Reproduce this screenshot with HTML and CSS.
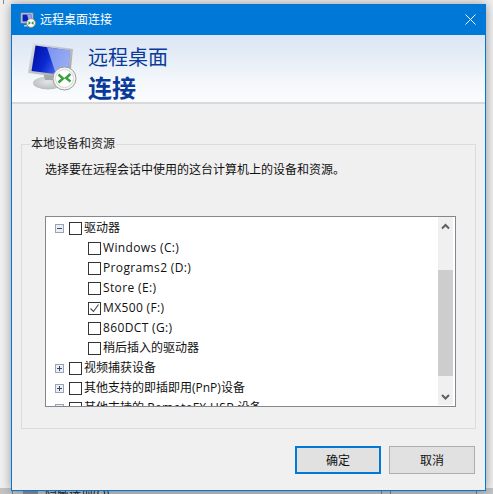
FILE: index.html
```html
<!DOCTYPE html>
<html lang="zh">
<head>
<meta charset="utf-8">
<title>远程桌面连接</title>
<link rel="stylesheet" href="styles.css">
</head>
<body>
<div class="backdrop-line"></div>
<div class="backdrop-strip">
  <i class="tick tick-a"></i><i class="tick tick-b"></i><i class="tick tick-c"></i><i class="tick tick-d"></i>
  <i class="foot-icon"></i>
  <span class="foot-text">隐藏选项(O)</span>
</div>
<main class="window">
  <header class="titlebar">
    <svg class="title-icon" width="16" height="16" viewBox="0 0 16 16">
      <rect x="1" y="1" width="12" height="10" fill="#d4d6da" stroke="#8d9095" stroke-width="0.8"/>
      <rect x="2.5" y="2.5" width="9" height="7" fill="#0a1fb8"/>
      <path d="M7 2.500h4.500v7H9z" fill="#8fa4f2"/>
      <path d="M4 13h7v1.500H4z" fill="#c6c8cc"/>
      <circle cx="11" cy="11" r="4.400" fill="#fff" stroke="#8f9491"/>
      <path d="M8.400 9.600l1.500 1.400-1.500 1.300M13.600 9.600l-1.600 1.400 1.600 1.300" fill="none" stroke="#2f9a33" stroke-width="1.200"/>
    </svg>
    <span class="title-text">远程桌面连接</span>
    <svg class="close" width="11" height="11" viewBox="0 0 11 11"><path d="M.5.5l10 10M10.500.5l-10 10" stroke="#fff" stroke-width="1" fill="none"/></svg>
  </header>
  <section class="banner">
    <svg class="banner-icon" width="50" height="50" viewBox="0 0 50 50">
      <defs>
        <linearGradient id="scr" x1="0" y1="0" x2="1" y2="0.4"><stop offset="0" stop-color="#000a9c"/><stop offset="0.5" stop-color="#0a2ad0"/><stop offset="1" stop-color="#5f7cf0"/></linearGradient>
        <linearGradient id="frm" x1="0" y1="0" x2="1" y2="1"><stop offset="0" stop-color="#e2e4e8"/><stop offset="1" stop-color="#9a9ea4"/></linearGradient>
        <radialGradient id="stand" cx="0.5" cy="0.4" r="0.6"><stop offset="0" stop-color="#e4e6e6"/><stop offset="1" stop-color="#b9bdbd"/></radialGradient>
      </defs>
      <ellipse cx="20" cy="41" rx="15" ry="6.500" fill="url(#stand)"/>
      <path d="M15 30h13l2 8H17z" fill="#a5a9ac"/>
      <path d="M5 1l40 6-3 29L0 31z" fill="url(#frm)"/>
      <path d="M7.500 3.500l34.500 5-2.500 25L3.500 29z" fill="url(#scr)"/>
      <path d="M19 5.200l23 3.300-2.500 25-11.500-1.300z" fill="#a9bcf7" opacity="0.75"/>
      <circle cx="36.500" cy="36.500" r="11.500" fill="#f4f5f4" stroke="#9a9e9c"/>
      <circle cx="36.500" cy="36.500" r="9" fill="#fff" stroke="#d4d7d5"/>
      <path d="M30.500 32.500l4.500 4-4.500 4M42.500 32l-4.500 4 4.500 3.500" fill="none" stroke="#37a23a" stroke-width="2.400"/>
    </svg>
    <div class="banner-copy">
      <div class="banner-top">远程桌面</div>
      <div class="banner-bottom">连接</div>
    </div>
  </section>
  <div class="content">
    <fieldset class="group">
      <legend class="legend">本地设备和资源</legend>
      <p class="hint">选择要在远程会话中使用的这台计算机上的设备和资源。</p>
      <div class="list">
        <div class="rows">
          <div class="row"><svg class="exp" width="9" height="9" viewBox="0 0 9 9"><rect x=".5" y=".5" width="8" height="8" fill="#eceef2" stroke="#9aa3b2"/><path d="M2 4.500h5" stroke="#2d4a80"/></svg><span class="box"></span><span class="label">驱动器</span></div>
          <div class="row child"><span class="box"></span><span class="label latin">Windows (C:)</span></div>
          <div class="row child"><span class="box"></span><span class="label latin">Programs2 (D:)</span></div>
          <div class="row child"><span class="box"></span><span class="label latin">Store (E:)</span></div>
          <div class="row child"><span class="box"><svg width="11" height="11" viewBox="0 0 11 11"><path d="M1.500 5.500l3 3 5-7" fill="none" stroke="#444" stroke-width="1.100"/></svg></span><span class="label latin">MX500 (F:)</span></div>
          <div class="row child"><span class="box"></span><span class="label latin">860DCT (G:)</span></div>
          <div class="row child"><span class="box"></span><span class="label">稍后插入的驱动器</span></div>
          <div class="row"><svg class="exp" width="9" height="9" viewBox="0 0 9 9"><rect x=".5" y=".5" width="8" height="8" fill="#eceef2" stroke="#9aa3b2"/><path d="M2 4.500h5M4.500 2v5" stroke="#2d4a80"/></svg><span class="box"></span><span class="label">视频捕获设备</span></div>
          <div class="row"><svg class="exp" width="9" height="9" viewBox="0 0 9 9"><rect x=".5" y=".5" width="8" height="8" fill="#eceef2" stroke="#9aa3b2"/><path d="M2 4.500h5M4.500 2v5" stroke="#2d4a80"/></svg><span class="box"></span><span class="label">其他支持的即插即用(PnP)设备</span></div>
          <div class="row"><svg class="exp" width="9" height="9" viewBox="0 0 9 9"><rect x=".5" y=".5" width="8" height="8" fill="#eceef2" stroke="#9aa3b2"/><path d="M2 4.500h5M4.500 2v5" stroke="#2d4a80"/></svg><span class="box"></span><span class="label">其他支持的 <span class="latin">RemoteFX USB</span> 设备</span></div>
        </div>
        <div class="scrollbar">
          <svg class="arrow" width="15" height="17" viewBox="0 0 15 17"><path d="M4 11.500l3.500-3.500 3.500 3.500" fill="none" stroke="#606060" stroke-width="2"/></svg>
          <div class="track"><div class="thumb"></div></div>
          <svg class="arrow" width="15" height="17" viewBox="0 0 15 17"><path d="M4 7l3.500 3.500 3.500-3.500" fill="none" stroke="#606060" stroke-width="2"/></svg>
        </div>
      </div>
    </fieldset>
    <div class="actions">
      <button class="btn primary" type="button">确定</button>
      <button class="btn" type="button">取消</button>
    </div>
  </div>
</main>
</body>
</html>
```

FILE: styles.css
```css
* { box-sizing: border-box; }
html, body { margin: 0; height: 100%; }
body {
  position: relative;
  width: 493px;
  height: 494px;
  overflow: hidden;
  background: #f0f0f0;
  font-family: "Open Sans", "Noto Sans CJK SC", sans-serif;
  font-size: 12px;
  color: #000;
  padding: 4px 0 0 11px;
}
.backdrop-line { position: absolute; left: 3px; top: 0; width: 1px; height: 4px; background: #8a8a8a; }
.backdrop-strip { position: absolute; left: 0; top: 488px; width: 493px; height: 6px; background: #c4c4c4; }
.tick { position: absolute; top: 0; width: 1px; height: 6px; background: #808080; }
.tick-a { left: 12px; }
.tick-b { left: 381px; }
.tick-c { left: 390px; }
.tick-d { left: 476px; }
.foot-icon { position: absolute; left: 23px; top: 0; width: 15px; height: 6px; background: #8a8f96; }
.foot-text { position: absolute; left: 45px; top: 0; font-size: 12px; line-height: 12px; color: #222; white-space: nowrap; }
.window {
  position: relative;
  width: 475px;
  height: 487px;
  background: #f0f0f0;
  border: 1px solid #0078d7;
  border-top: 0;
  display: flex;
  flex-direction: column;
  box-shadow: 0 0 10px rgba(0,0,0,.38);
}
.titlebar {
  height: 31px;
  flex: none;
  background: #0078d7;
  display: flex;
  align-items: center;
  padding: 0 9px 0 8px;
  color: #fff;
}
.title-icon { flex: none; margin-right: 4px; }
.title-text { flex: 1; font-size: 12px; line-height: 16px; }
.close { flex: none; }
.banner {
  height: 69px;
  flex: none;
  display: flex;
  padding: 7px 0 0 16px;
  background: linear-gradient(#dce6f4, #e4ecf6 30%, #f4f8fb 70%, #fbfcfd);
  border-bottom: 2px solid #d9d9d9;
}
.banner-icon { flex: none; margin-right: 10px; }
.banner-copy { display: flex; flex-direction: column; color: #0b3a9a; padding-top: 3px; }
.banner-top { font-size: 20px; line-height: 26px; }
.banner-bottom { font-size: 24px; line-height: 32px; font-weight: 700; color: #0a3a99; margin-top: 1px; }
.content {
  flex: 1;
  display: flex;
  flex-direction: column;
  padding: 32px 9px 0 9px;
}
.group {
  margin: 0;
  height: 293px;
  border: 1px solid #dcdcdc;
  padding: 0 19px 0 23px;
  min-width: 0;
}
.legend { padding: 0 1px; margin-left: -15px; font-size: 12px; line-height: 16px; color: #222; }
.hint { margin: 10px 0 0; font-size: 12px; line-height: 16px; color: #111; }
.list {
  margin-top: 38px;
  height: 191px;
  border: 1px solid #828790;
  background: #fff;
  display: flex;
}
.rows { flex: 1; min-width: 0; overflow: hidden; padding-top: 1px; }
.row { height: 20px; display: flex; align-items: center; padding-left: 9px; white-space: nowrap; }
.row.child { padding-left: 42px; }
.exp { flex: none; margin-right: 5px; }
.box {
  width: 13px; height: 13px; flex: none;
  border: 1px solid #333;
  background: #fff;
  margin-right: 2px;
  display: flex;
}
.label { line-height: 20px; color: #111; }
.latin { letter-spacing: .36px; }
.scrollbar {
  flex: none;
  width: 15px;
  margin: 0 2px 0 0;
  height: 188px;
  background: #f0f0f0;
  display: flex;
  flex-direction: column;
}
.arrow { flex: none; }
.track { flex: 1; padding-top: 36px; }
.thumb { height: 106px; background: #cdcdcd; }
.actions { display: flex; justify-content: flex-end; gap: 8px; margin: 17px 1px 0 0; }
.btn {
  width: 86px; height: 28px;
  background: #e1e1e1;
  border: 1px solid #adadad;
  font: inherit;
  color: #111;
  padding: 0;
}
.primary { border: 2px solid #0078d7; }
```
